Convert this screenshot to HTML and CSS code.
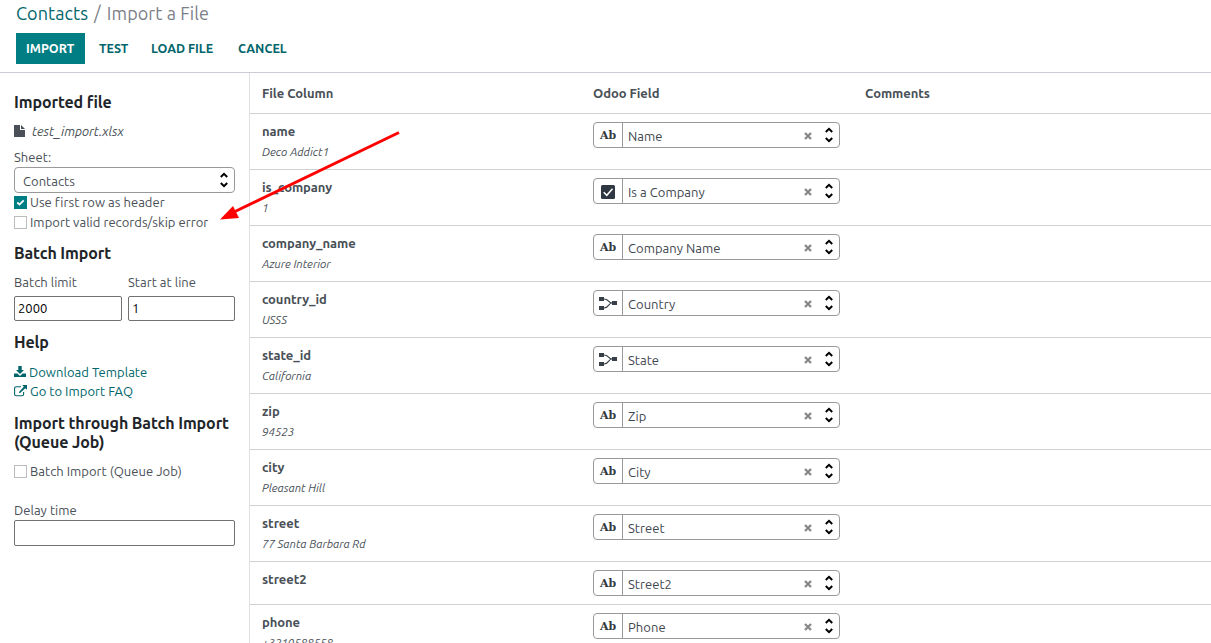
FILE: index.html
```
<!DOCTYPE html>
<html lang="en">
<head>
<meta charset="utf-8">
<title>Import a File</title>
<link rel="stylesheet" href="styles.css">
</head>
<body>
<svg class="defs" width="0" height="0">
  <symbol id="updown" viewBox="0 0 8 16"><path d="M.8 5 4 1.8 7.200 5M.8 11 4 14.200 7.200 11" fill="none" stroke="#000" stroke-width="2"/></symbol>
  <symbol id="clear" viewBox="0 0 8 8"><path d="M1 1l6 6M7 1 1 7" fill="none" stroke="#888" stroke-width="2.3"/></symbol>
  <symbol id="relation" viewBox="0 0 18 14"><path d="M0 0h5v4H0zM0 9h5v4H0zM13 4h5v4h-5z" fill="#374049"/><path d="M5 2c5 0 4 4 8 4M5 11c5 0 4-5 8-5" fill="none" stroke="#374049" stroke-width="1.2"/></symbol>
  <symbol id="check" viewBox="0 0 14 14"><rect width="14" height="14" rx="1.5" fill="#2f3842"/><path d="M2.700 7.200 5.800 10.300 11.500 3.800" fill="none" stroke="#fff" stroke-width="1.5"/></symbol>
</svg>
<header class="control-panel">
  <div class="breadcrumb"><a>Contacts</a><span class="slash">/</span><span>Import a File</span></div>
  <div class="buttons">
    <button class="btn btn-primary">IMPORT</button>
    <button class="btn btn-test">TEST</button>
    <button class="btn btn-load">LOAD FILE</button>
    <button class="btn btn-cancel">CANCEL</button>
  </div>
</header>
<main class="content">
  <aside class="sidebar">
    <h4>Imported file</h4>
    <div class="file"><svg width="11" height="12" viewBox="0 0 11 12"><path d="M0 0h6v5h5v7H0zM7 0l4 4H7z" fill="#495057"/></svg><em>test_import.xlsx</em></div>
    <div class="sheet-label">Sheet:</div>
    <div class="sheet"><span>Contacts</span><svg width="8" height="16"><use href="#updown"/></svg></div>
    <div class="options">
      <div class="option"><span class="box checked"><svg width="13" height="13" viewBox="0 0 13 13"><path d="M3.300 6.500 5.500 8.600 9.700 4.400" fill="none" stroke="#fff" stroke-width="1.8"/></svg></span><span>Use first row as header</span></div>
      <div class="option"><span class="box"></span><span>Import valid records/skip error</span></div>
    </div>
    <h4 class="batch">Batch Import</h4>
    <div class="pair">
      <label><span>Batch limit</span><span class="input">2000</span></label>
      <label><span>Start at line</span><span class="input">1</span></label>
    </div>
    <h4 class="help">Help</h4>
    <a class="link"><svg width="12" height="12" viewBox="0 0 12 12"><path d="M4.300 0h3.400v4H10L6 8 2 4h2.300z"/><path d="M0 7.500h3.400L6 10l2.600-2.500H12V11H0z"/></svg><span>Download Template</span></a>
    <a class="link faq"><svg width="13" height="12" viewBox="0 0 13 12"><path d="M7 1.800H2.200Q.6 1.800.6 3.400v5.800q0 1.600 1.600 1.600H8q1.600 0 1.600-1.600V7" fill="none" stroke="currentColor" stroke-width="1.1"/><path d="M8.200 0H13v4.800L11.300 3.200 5.800 8.300 4.800 7.300 9.800 1.700z"/></svg><span>Go to Import FAQ</span></a>
    <h4 class="queue">Import through Batch Import<br>(Queue Job)</h4>
    <div class="option"><span class="box"></span><span>Batch Import (Queue Job)</span></div>
    <label class="delay"><span>Delay time</span><span class="input"></span></label>
  </aside>
  <section class="mapping">
    <div class="row head"><div>File Column</div><div>Odoo Field</div><div>Comments</div></div>
    <div id="rows"></div>
  </section>
</main>
<svg class="arrow" width="182" height="92" viewBox="218 130 182 92"><path d="M399 132.500 234 212" stroke="#f00" stroke-width="3" fill="none"/><path d="M220 219.500 233 206 239 218z" fill="#f00"/></svg>
<script src="rows.js"></script>
</body>
</html>
```
FILE: styles.css
```
* { box-sizing: border-box; }
body { margin: 0; height: 643px; overflow: hidden; position: relative; background: #fff; color: #495057; font: 13px/20px Ubuntu, "Noto Sans", sans-serif; letter-spacing: 0.04px; white-space: nowrap; }
.defs { position: absolute; }
svg { flex: none; display: block; }
.control-panel { height: 73px; padding: 0 16px; border-bottom: 1px solid #c9ccd2; }
.breadcrumb { font-size: 18px; line-height: 26px; height: 33px; color: #7c7f89; letter-spacing: 0.09px; }
.breadcrumb a, .link { color: #01666b; }
.slash { margin: 0 6px; }
.buttons { display: flex; }
.btn { height: 31px; padding: 0; border: 0; background: none; color: #01666b; font: 600 12.5px/31px Ubuntu, "Open Sans", sans-serif; letter-spacing: 0; text-align: left; }
.btn-primary { width: 69px; padding-left: 10px; margin-right: 14px; background: #017e84; color: #fff; }
.btn-test { width: 52px; }
.btn-load { width: 87px; }
.content { display: flex; height: 570px; }
.sidebar { width: 250px; padding: 20px 14px 0; border-right: 1px solid #dee0e3; flex: none; }
h4 { margin: 0; font: 600 16px/19px Ubuntu, "Open Sans", sans-serif; color: #212529; letter-spacing: -0.1px; }
.file { display: flex; align-items: center; height: 20px; margin-top: 9px; gap: 7px; letter-spacing: -0.05px; }
.sheet-label { margin-top: 6px; }
.sheet { display: flex; justify-content: space-between; align-items: center; height: 26px; padding: 2px 6px 0 8px; border: 1px solid #999; border-radius: 4px; }
.sheet svg { margin-top: -3px; }
.options { margin-top: -1px; }
.option { display: flex; align-items: center; height: 20px; gap: 3px; }
.box { width: 13px; height: 13px; border: 1px solid #babcbe; flex: none; }
.box.checked { border: 0; background: #017e84; }
.batch { margin-top: 12px; }
.pair { display: grid; grid-template-columns: 108px 107px; gap: 6px; margin-top: 9px; }
label > span { display: block; }
.input { height: 26px; border: 1px solid #717171; border-radius: 2px; padding: 0 3px; line-height: 23px; color: #000; letter-spacing: 0; }
.pair .input { height: 25px; margin-top: 4px; }
.help { margin-top: 12px; }
.link { display: flex; align-items: center; height: 19px; gap: 3px; margin-top: 10px; fill: currentColor; }
.faq { margin-top: 0; }
.queue { margin-top: 14px; margin-bottom: 9px; }
.delay { display: block; margin-top: 19px; }
.mapping { flex: 1; }
.row { display: grid; grid-template-columns: 331px 272px 1fr; height: 56px; padding: 8px 0 0 12px; border-bottom: 1px solid #cfd1d3; }
.row.short { height: 43px; }
.head { height: 41px; padding-top: 10px; }
.head, .name { font-family: Ubuntu, "Open Sans", sans-serif; font-weight: 600; letter-spacing: -0.05px; }
.name { margin-top: -1px; }
.sample { margin-top: 1px; font-size: 11.5px; font-style: italic; line-height: 20px; letter-spacing: -0.03px; }
.field { display: flex; align-items: center; width: 247px; height: 26px; border: 1px solid #999; border-radius: 4px; padding-right: 6px; }
.type { display: flex; align-items: center; justify-content: center; width: 29px; height: 24px; padding-top: 1px; border-right: 1px solid #999; font: bold 11px/20px "DejaVu Serif", serif; color: #343a40; letter-spacing: 0; }
.value { flex: 1; padding: 1px 0 0 5px; color: #3f474f; }
.clear { margin-right: 13px; margin-top: 2px; }
.arrow { position: absolute; left: 218px; top: 130px; }
```
FILE: rows.js
```
const rows = [
  ["name", "Deco Addict1", "Name", "text"],
  ["is_company", "1", "Is a Company", "check"],
  ["company_name", "Azure Interior", "Company Name", "text"],
  ["country_id", "USSS", "Country", "relation"],
  ["state_id", "California", "State", "relation"],
  ["zip", "94523", "Zip", "text"],
  ["city", "Pleasant Hill", "City", "text"],
  ["street", "77 Santa Barbara Rd", "Street", "text"],
  ["street2", "", "Street2", "text"],
  ["phone", "+3210588558", "Phone", "text"]
];
const icons = {
  text: "Ab",
  check: '<svg width="14" height="14"><use href="#check"/></svg>',
  relation: '<svg width="18" height="14"><use href="#relation"/></svg>'
};
document.getElementById("rows").innerHTML = rows.map(([name, sample, field, type]) => `
  <div class="row${sample ? "" : " short"}">
    <div><div class="name">${name}</div><div class="sample">${sample}</div></div>
    <div class="field"><span class="type">${icons[type]}</span><span class="value">${field}</span><svg class="clear" width="8" height="8"><use href="#clear"/></svg><svg width="8" height="16"><use href="#updown"/></svg></div>
  </div>`).join("");
```
